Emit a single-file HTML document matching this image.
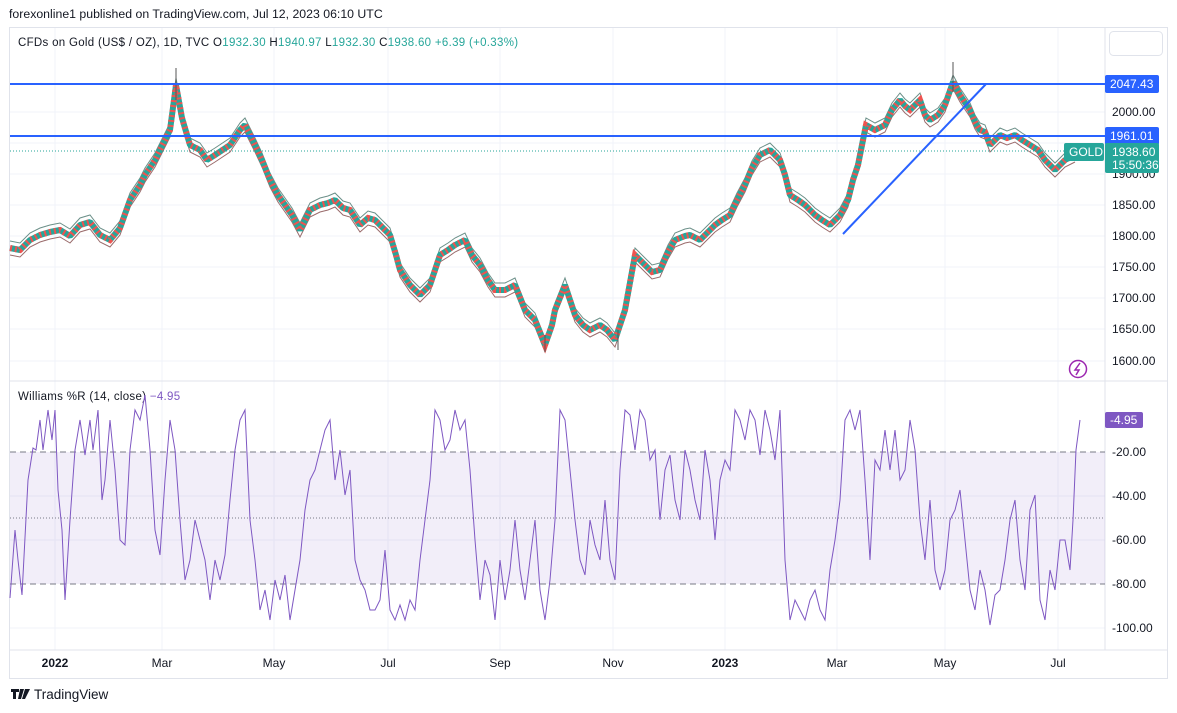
<!DOCTYPE html>
<html><head><meta charset="utf-8"><style>
body{margin:0;width:1177px;height:713px;background:#fff;font-family:"Liberation Sans",sans-serif;overflow:hidden;position:relative}
.t{position:absolute;font-size:12px;color:#131722;white-space:nowrap}
</style></head><body>
<div class="t" style="left:9px;top:7px;font-size:12.3px">forexonline1 published on TradingView.com, Jul 12, 2023 06:10 UTC</div>
<svg width="1177" height="713" style="position:absolute;left:0;top:0" font-family="Liberation Sans, sans-serif">
<defs>
<polyline id="p" points="10,248 20,250 30,240 40,235 50,232 60,230 70,236 80,225 90,222 100,235 110,240 120,228 130,200 140,185 145,175 155,160 160,150 170,130 176,85 182,118 190,145 200,150 207,160 215,155 230,145 240,130 245,125 255,145 262,160 270,180 278,195 285,205 292,215 300,230 310,210 320,205 328,203 335,200 343,208 350,210 360,225 368,218 375,220 383,228 390,235 396,255 400,270 410,285 420,295 430,285 440,255 448,250 455,245 465,240 472,255 480,265 488,280 495,290 505,290 515,285 525,310 535,320 545,345 552,325 555,310 565,285 570,300 575,315 583,325 590,330 600,325 607,330 615,340 625,310 635,255 645,265 652,272 660,270 668,252 675,240 685,236 690,235 700,240 708,232 715,225 722,220 730,215 737,200 745,185 752,168 760,155 770,150 780,160 785,175 790,195 798,200 805,205 815,215 822,220 830,225 840,215 848,200 853,180 858,165 863,140 866,125 875,130 885,125 892,110 900,100 905,106 910,110 920,100 925,115 930,120 938,115 945,105 953,82 960,95 970,110 975,122 980,130 985,132 990,145 1000,135 1007,138 1015,135 1022,140 1030,145 1038,150 1045,160 1055,170 1065,160 1075,155"/>
</defs>
<rect x="9.5" y="27.5" width="1158" height="651" fill="none" stroke="#e0e3eb"/>
<rect x="1109.5" y="31.5" width="53" height="24" rx="4" fill="#fff" stroke="#e0e3eb"/>
<g stroke="#f0f3fa">
<line x1="55" y1="28" x2="55" y2="650"/><line x1="162" y1="28" x2="162" y2="650"/><line x1="274" y1="28" x2="274" y2="650"/><line x1="388" y1="28" x2="388" y2="650"/><line x1="500" y1="28" x2="500" y2="650"/><line x1="613" y1="28" x2="613" y2="650"/><line x1="725" y1="28" x2="725" y2="650"/><line x1="837" y1="28" x2="837" y2="650"/><line x1="945" y1="28" x2="945" y2="650"/><line x1="1058" y1="28" x2="1058" y2="650"/>
<line x1="10" y1="112" x2="1105" y2="112"/><line x1="10" y1="143" x2="1105" y2="143"/><line x1="10" y1="174" x2="1105" y2="174"/><line x1="10" y1="205" x2="1105" y2="205"/><line x1="10" y1="236" x2="1105" y2="236"/><line x1="10" y1="267" x2="1105" y2="267"/><line x1="10" y1="298" x2="1105" y2="298"/><line x1="10" y1="329" x2="1105" y2="329"/><line x1="10" y1="361" x2="1105" y2="361"/>
<line x1="10" y1="496" x2="1105" y2="496"/><line x1="10" y1="540" x2="1105" y2="540"/><line x1="10" y1="628" x2="1105" y2="628"/>
</g>
<line x1="10" y1="381" x2="1167" y2="381" stroke="#e0e3eb"/>
<line x1="1105" y1="28" x2="1105" y2="650" stroke="#e0e3eb"/>
<line x1="10" y1="650" x2="1167" y2="650" stroke="#e0e3eb"/>
<use href="#p" fill="none" stroke="#6b8f88" stroke-width="1" transform="translate(0,-7)"/>
<use href="#p" fill="none" stroke="#9a6b6b" stroke-width="1" transform="translate(0,7)"/>
<use href="#p" fill="none" stroke="#26a69a" stroke-width="6" stroke-linejoin="bevel"/>
<use href="#p" fill="none" stroke="#ef5350" stroke-width="6" stroke-dasharray="2 3"/>
<g stroke="#555" stroke-width="1"><line x1="176" y1="68" x2="176" y2="100"/><line x1="953" y1="62" x2="953" y2="92"/><line x1="545" y1="335" x2="545" y2="352"/><line x1="618" y1="330" x2="618" y2="350"/></g>
<line x1="10" y1="84" x2="1105" y2="84" stroke="#2962ff" stroke-width="2"/>
<line x1="10" y1="136" x2="1105" y2="136" stroke="#2962ff" stroke-width="2"/>
<line x1="843" y1="234" x2="986" y2="84" stroke="#2962ff" stroke-width="2"/>
<line x1="10" y1="151" x2="1105" y2="151" stroke="#26a69a" stroke-dasharray="1 2"/>
<g font-size="12" fill="#131722">
<text x="1112" y="116">2000.00</text><text x="1112" y="178">1900.00</text><text x="1112" y="209">1850.00</text><text x="1112" y="240">1800.00</text><text x="1112" y="271">1750.00</text><text x="1112" y="302">1700.00</text><text x="1112" y="333">1650.00</text><text x="1112" y="365">1600.00</text>
<text x="1112" y="456">-20.00</text><text x="1112" y="500">-40.00</text><text x="1112" y="544">-60.00</text><text x="1112" y="588">-80.00</text><text x="1112" y="632">-100.00</text>
</g>
<rect x="1105" y="75" width="54" height="18" rx="2" fill="#2962ff"/><text x="1110" y="88" font-size="12" fill="#fff">2047.43</text>
<rect x="1105" y="127" width="54" height="18" rx="2" fill="#2962ff"/><text x="1110" y="140" font-size="12" fill="#fff">1961.01</text>
<rect x="1064" y="143" width="40" height="18" rx="2" fill="#26a69a"/><text x="1069" y="156" font-size="12" fill="#fff">GOLD</text>
<rect x="1105" y="143" width="54" height="30" rx="2" fill="#26a69a"/><text x="1112" y="156" font-size="12" fill="#fff">1938.60</text><text x="1112" y="169" font-size="12" fill="#fff">15:50:36</text>
<circle cx="1078" cy="369" r="8.5" fill="none" stroke="#9c27b0" stroke-width="1.5"/><path d="M1080 363 L1075 370 L1079 370 L1076 375" fill="none" stroke="#9c27b0" stroke-width="1.5"/>
<text x="18" y="46" font-size="11.5" letter-spacing="0.3" fill="#131722">CFDs on Gold (US$ / OZ), 1D, TVC  O<tspan fill="#26a69a">1932.30</tspan>  H<tspan fill="#26a69a">1940.97</tspan>  L<tspan fill="#26a69a">1932.30</tspan>  C<tspan fill="#26a69a">1938.60</tspan>  <tspan fill="#26a69a">+6.39 (+0.33%)</tspan></text>
<text x="18" y="400" font-size="11.5" letter-spacing="0.3" fill="#131722">Williams %R (14, close)  <tspan fill="#7e57c2">−4.95</tspan></text>
<rect x="10" y="452" width="1095" height="132" fill="#7e57c2" fill-opacity="0.1"/>
<g stroke="#787b86" stroke-dasharray="6 4"><line x1="10" y1="452" x2="1105" y2="452"/><line x1="10" y1="584" x2="1105" y2="584"/></g>
<line x1="10" y1="518" x2="1105" y2="518" stroke="#787b86" stroke-dasharray="1 2"/>
<polyline fill="none" stroke="#7e57c2" stroke-width="1" points="10,598 15,530 18,560 22,595 28,480 33,448 36,450 40,420 43,450 48,410 52,440 55,410 58,490 62,530 65,600 70,520 75,450 80,420 85,455 90,420 93,450 98,410 102,500 105,480 110,420 115,470 120,540 125,545 130,450 135,410 140,420 145,395 150,450 155,530 160,555 165,480 170,420 175,450 180,520 185,580 190,560 195,520 200,540 205,560 210,600 215,560 220,580 225,555 230,500 235,450 240,420 245,410 250,520 255,560 260,610 265,590 270,620 275,580 280,600 285,575 290,620 295,590 300,560 305,510 310,480 315,470 320,450 325,430 330,420 335,480 340,450 345,495 350,470 355,560 360,580 365,590 370,610 375,610 380,600 385,550 390,610 395,620 400,605 405,620 410,600 415,610 420,560 425,520 430,480 435,410 440,420 445,450 450,440 455,410 460,430 465,420 470,470 475,540 480,600 485,560 490,575 495,620 500,560 505,600 510,570 515,520 520,570 525,600 530,560 535,520 540,590 545,620 550,580 555,520 560,410 565,420 570,470 575,520 580,560 585,575 590,520 595,545 600,560 605,500 610,560 615,580 620,470 625,410 630,415 635,450 640,410 645,420 650,460 655,450 660,520 665,470 670,455 675,500 680,520 685,450 690,470 695,500 700,520 705,450 710,480 715,540 720,480 725,460 730,470 735,410 740,420 745,440 750,410 755,420 760,455 765,410 770,430 775,460 780,410 785,560 790,620 795,600 800,610 805,620 810,600 815,590 820,610 825,620 830,570 835,540 840,500 845,420 850,410 855,430 860,410 865,480 870,560 875,460 880,470 885,430 890,470 895,430 900,480 905,470 910,420 915,450 920,520 925,560 930,500 935,570 940,590 945,570 950,520 955,510 960,490 965,540 970,590 975,610 980,570 985,590 990,625 995,595 1000,590 1005,560 1010,520 1015,500 1020,560 1025,590 1030,510 1035,495 1040,600 1045,620 1050,570 1055,590 1060,540 1065,540 1070,570 1073,520 1076,450 1080,420"/>
<rect x="1105" y="412" width="38" height="16" rx="2" fill="#7e57c2"/><text x="1110" y="424" font-size="12" fill="#fff">-4.95</text>
<g font-size="12" fill="#131722" text-anchor="middle">
<text x="55" y="667" font-weight="bold">2022</text><text x="162" y="667">Mar</text><text x="274" y="667">May</text><text x="388" y="667">Jul</text><text x="500" y="667">Sep</text><text x="613" y="667">Nov</text><text x="725" y="667" font-weight="bold">2023</text><text x="837" y="667">Mar</text><text x="945" y="667">May</text><text x="1058" y="667">Jul</text>
</g>
<path d="M11 689h8v3h-3v7h-3v-7h-2z M20 689h4l-3 10h-3z M25 689h5l-5 10h-3z" fill="#131722"/>
<text x="34" y="699" font-size="13.5" fill="#131722">TradingView</text>
</svg>
</body></html>
